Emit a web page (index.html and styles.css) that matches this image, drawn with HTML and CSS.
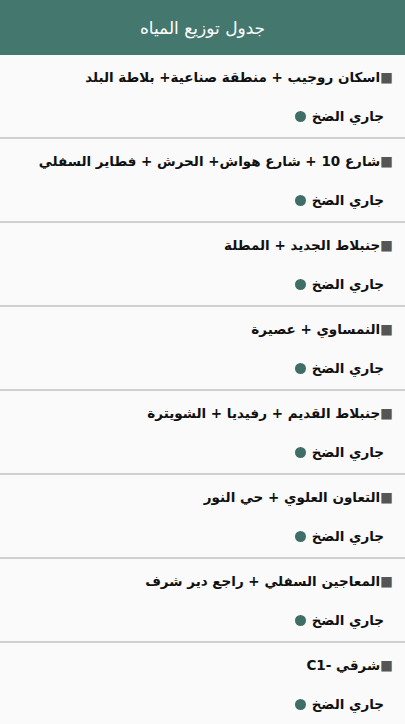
FILE: index.html
```html
<!DOCTYPE html>
<html lang="ar" dir="rtl">
<head>
    <meta charset="UTF-8">
    <meta name="viewport" content="width=device-width, initial-scale=1.0">
    <title>جدول توزيع المياه</title>
    <link rel="stylesheet" href="styles.css">
</head>
<body>

    <!-- الشريط العلوي -->
    <header class="app-bar">
        <h1>جدول توزيع المياه</h1>
    </header>

    <ul class="schedule">
        <li class="area">
            <div class="area-name">■اسكان روجيب + منطقة صناعية+ بلاطة البلد</div>
            <div class="status">جاري الضخ <span class="dot"></span></div>
        </li>
        <li class="area">
            <div class="area-name">■شارع 10 + شارع هواش+ الحرش + فطاير السفلي</div>
            <div class="status">جاري الضخ <span class="dot"></span></div>
        </li>
        <li class="area">
            <div class="area-name">■جنبلاط الجديد + المطلة</div>
            <div class="status">جاري الضخ <span class="dot"></span></div>
        </li>
        <li class="area">
            <div class="area-name">■النمساوي + عصيرة</div>
            <div class="status">جاري الضخ <span class="dot"></span></div>
        </li>
        <li class="area">
            <div class="area-name">■جنبلاط القديم + رفيديا + الشويترة</div>
            <div class="status">جاري الضخ <span class="dot"></span></div>
        </li>
        <li class="area">
            <div class="area-name">■التعاون العلوي + حي النور</div>
            <div class="status">جاري الضخ <span class="dot"></span></div>
        </li>
        <li class="area">
            <div class="area-name">■المعاجين السفلي + راجع دير شرف</div>
            <div class="status">جاري الضخ <span class="dot"></span></div>
        </li>
        <li class="area">
            <div class="area-name">■شرقي -C1</div>
            <div class="status">جاري الضخ <span class="dot"></span></div>
        </li>
    </ul>

</body>
</html>
```

FILE: styles.css
```css
/* الصفحة */
body {
    font-family: 'DejaVu Sans', sans-serif;
    margin: 0;
    padding: 0;
    background-color: #fafafa;
    color: #111;
    height: 724px;
    overflow: hidden;
}

/* الشريط العلوي */
.app-bar {
    height: 55px;
    background-color: #44786e;
    display: flex;
    align-items: center;
    justify-content: center;
}

.app-bar h1 {
    margin: 0;
    font-size: 17px;
    font-weight: normal;
    color: #fff;
}

/* القائمة */
.schedule {
    list-style: none;
    margin: 0;
    padding: 0;
}

.area {
    height: 82px;
    border-bottom: 2px solid #d0d0d0;
    display: flex;
    flex-direction: column;
    padding-right: 12px;
}

.area-name {
    font-size: 13.5px;
    font-weight: bold;
    line-height: 20px;
    margin-top: 12px;
    white-space: nowrap;
}

.area-name::first-letter {
    color: #555;
}

.status {
    font-size: 13.5px;
    font-weight: bold;
    line-height: 20px;
    margin-top: 19px;
    margin-right: 9px;
    display: flex;
    align-items: center;
    gap: 6px;
}

.dot {
    width: 11px;
    height: 11px;
    border-radius: 50%;
    background-color: #3f6e66;
}
```
